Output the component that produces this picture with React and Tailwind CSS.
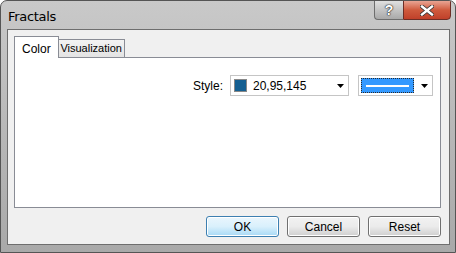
import React from "react";

const Arrow = () => (
  <svg width="7" height="4" viewBox="0 0 7 4" className="shrink-0">
    <path d="M0 0h7L3.5 4z" fill="#000" />
  </svg>
);

const Button = ({ label, primary }) => (
  <button
    className={
      primary
        ? "w-[73px] h-[21px] rounded-[3px] border border-[#3c7fb1] bg-gradient-to-b from-[#eaf6fd] via-[#d9f0fc] to-[#a7d9f5] text-[12px] text-black shadow-[inset_0_0_0_1px_#fff]"
        : "w-[73px] h-[21px] rounded-[3px] border border-[#707070] bg-gradient-to-b from-[#f2f2f2] via-[#ebebeb] to-[#cfcfcf] text-[12px] text-black shadow-[inset_0_0_0_1px_#fff]"
    }
  >
    {label}
  </button>
);

export default function App() {
  return (
    <div className="w-[456px] h-[253px] flex flex-col rounded-t-[7px] border border-[#555] bg-gradient-to-b from-[#c9c9c9] via-[#b8b8b8] to-[#a9a9a9] pl-[6px] pr-[5px] pb-[7px] font-['Liberation_Sans',sans-serif] overflow-hidden">
      {/* title bar */}
      <div className="h-[28px] flex items-start justify-between">
        <span className="pl-[1px] pt-[6px] text-[13px] text-black font-['DejaVu_Sans',sans-serif] tracking-[-0.3px]">Fractals</span>
        <div className="flex -mt-[1px] mr-[-1px]">
          <div className="w-[29px] h-[20px] flex items-center justify-center rounded-bl-[4px] border border-[#6d6d6d] border-r-0 bg-gradient-to-b from-[#e0e0e0] via-[#c4c4c4] to-[#a9a9a9] text-white text-[14px] font-bold [text-shadow:0_0_1px_#222,0_0_1px_#222,0_0_2px_#444]">
            ?
          </div>
          <div className="w-[48px] h-[20px] flex items-center justify-center rounded-br-[4px] border border-[#6d2e26] bg-gradient-to-b from-[#e8a493] via-[#cf5a3d] to-[#c0402a]">
            <svg width="14" height="11" viewBox="0 0 14 11">
              <path d="M2 1.5l10 8M12 1.5l-10 8" stroke="#333" strokeWidth="4" strokeLinecap="square" />
              <path d="M2 1.5l10 8M12 1.5l-10 8" stroke="#fff" strokeWidth="2.4" strokeLinecap="square" />
            </svg>
          </div>
        </div>
      </div>

      {/* client area */}
      <div className="flex-1 flex flex-col bg-[#f0f0f0] border border-[#6e6e6e] pt-[6px] pl-[6px] pr-[8px] pb-[6px]">
        <div className="flex items-end h-[21px] relative z-10">
          <div className="h-[22px] -mb-[1px] px-[7px] flex items-start pt-[3px] bg-white border border-b-0 border-[#898c95] text-[12px] text-black">
            Color
          </div>
          <div className="h-[18px] w-[66px] flex items-center justify-center bg-gradient-to-b from-[#f3f3f3] to-[#e3e3e3] border border-l-0 border-b-0 border-[#898c95] text-[11px] text-black">
            Visualization
          </div>
        </div>
        <div className="h-[151px] bg-white border border-[#898c95] flex items-start justify-end pt-[17px] pr-[7px]">
          <div className="flex items-center">
            <span className="text-[12px] text-black mr-[7px]">Style:</span>
            <div className="w-[119px] h-[21px] flex items-center border border-[#c5c5c5] bg-white pl-[3px] pr-[4px]">
              <div className="w-[13px] h-[13px] border border-[#888] bg-[rgb(20,95,145)]" />
              <span className="ml-[6px] flex-1 text-[12px] text-black">20,95,145</span>
              <Arrow />
            </div>
            <div className="ml-[9px] w-[75px] h-[21px] flex items-center border border-[#c5c5c5] bg-white pl-[2px] pr-[4px]">
              <div className="w-[53px] h-[15px] flex items-center justify-center bg-[#3399ff] border border-dotted border-[#2a2a2a]">
                <div className="w-[43px] h-[2px] bg-white" />
              </div>
              <div className="flex-1 flex justify-end">
                <Arrow />
              </div>
            </div>
          </div>
        </div>
        <div className="flex justify-end gap-[8px] mt-[8px]">
          <Button label="OK" primary />
          <Button label="Cancel" />
          <Button label="Reset" />
        </div>
      </div>
    </div>
  );
}
